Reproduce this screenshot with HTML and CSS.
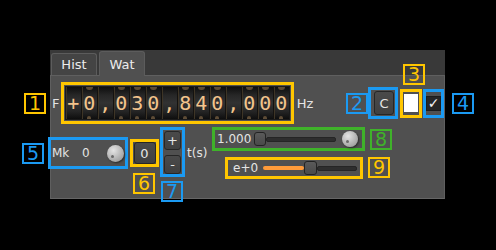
FILE: index.html
```html
<!DOCTYPE html>
<html>
	<head>
		<meta charset="UTF-8">
		<title>Wat</title>
		<link rel="stylesheet" href="styles.css">
	</head>
	<body>
		<div class="window">
			<div class="tabs">
				<div class="tab">Hist</div>
				<div class="tab tab-on">Wat</div>
			</div>
			<div class="panel">
				<!-- frequency row -->
				<div class="row row-freq">
					<span class="lbl-f">F</span>
					<div class="hl hl-yellow freq">
						<div class="digits">
							<div class="cell">+</div>
							<div class="cell roll">0</div>
							<div class="cell">,</div>
							<div class="cell roll">0</div>
							<div class="cell roll">3</div>
							<div class="cell roll">0</div>
							<div class="cell">,</div>
							<div class="cell roll">8</div>
							<div class="cell roll">4</div>
							<div class="cell roll">0</div>
							<div class="cell">,</div>
							<div class="cell roll">0</div>
							<div class="cell roll">0</div>
							<div class="cell roll">0</div>
						</div>
					</div>
					<span class="lbl-hz">Hz</span>
					<div class="hl hl-blue box-c"><span class="btn btn-c">C</span></div>
					<div class="hl hl-yellow box-sw"><span class="swatch"></span></div>
					<div class="hl hl-blue box-ck"><span class="check">&#10003;</span></div>
				</div>

				<!-- controls row -->
				<div class="row row-ctl">
					<div class="hl hl-blue box-mk">
						<span class="mk-lbl">Mk</span>
						<span class="mk-val">0</span>
						<span class="knob"></span>
					</div>
					<div class="hl hl-yellow box-zero"><span class="btn btn-zero">0</span></div>
					<div class="hl hl-blue box-pm">
						<span class="btn btn-pm">+</span>
						<span class="btn btn-pm">-</span>
					</div>
					<span class="lbl-t">t(s)</span>
					<div class="sliders">
						<div class="hl hl-green box-time">
							<span class="val">1.000</span>
							<div class="slider slider-time">
								<span class="handle"></span>
								<span class="rest"></span>
							</div>
							<span class="knob knob-sm"></span>
						</div>
						<div class="hl hl-yellow box-exp">
							<span class="val">e+0</span>
							<div class="slider slider-exp">
								<span class="fill" style="width: 41px;"></span>
								<span class="handle"></span>
								<span class="rest"></span>
							</div>
						</div>
					</div>
				</div>
			</div>
		</div>

		<span class="badge by b1">1</span>
		<span class="badge bb b2">2</span>
		<span class="badge by b3">3</span>
		<span class="badge bb b4">4</span>
		<span class="badge bb b5">5</span>
		<span class="badge by b6">6</span>
		<span class="badge bb b7">7</span>
		<span class="badge bg b8">8</span>
		<span class="badge by b9">9</span>
	</body>
</html>
```

FILE: styles.css
```css
body {
	margin: 0;
	width: 496px;
	height: 250px;
	position: relative;
	overflow: hidden;
	background: #000;
	font-family: "DejaVu Sans", sans-serif;
	font-size: 12px;
	color: #e4e4e4;
}

.window {
	margin: 50px 0 0 50px;
	width: 395px;
	height: 149px;
	background: #393939;
	display: flex;
	flex-direction: column;
}

.tabs {
	display: flex;
	align-items: flex-end;
	height: 25px;
	padding-left: 1px;
	gap: 2px;
	flex-shrink: 0;
}

.tab {
	box-sizing: border-box;
	width: 46px;
	height: 22px;
	border: 1px solid #5c5c5c;
	border-bottom: none;
	border-radius: 3px 3px 0 0;
	background: #444;
	display: flex;
	align-items: center;
	justify-content: center;
	font-size: 13px;
	color: #ececec;
}

.tab-on {
	height: 25px;
	background: #505050;
	margin-bottom: -1px;
	position: relative;
	z-index: 1;
}

.panel {
	flex: 1;
	background: #505050;
	border: 1px solid #5f5f5f;
	border-bottom-color: #666;
	padding: 6px 0 0 0;
}

.row {
	display: flex;
	align-items: center;
	padding-left: 1px;
}

.row-ctl {
	margin-top: 3px;
}

/* highlight frames */
.hl {
	box-sizing: border-box;
	border: 3px solid;
	display: flex;
	align-items: center;
	flex-shrink: 0;
}

.hl-yellow { border-color: #ffc600; }
.hl-blue { border-color: #1b9af2; }
.hl-green { border-color: #3fb22a; }

/* frequency display */
.lbl-f {
	width: 10px;
	font-size: 13px;
}

.freq {
	width: 233px;
	height: 42px;
	padding: 1px;
}

.digits {
	display: flex;
	width: 100%;
	height: 100%;
	box-sizing: border-box;
	border: 1px solid #1a1a1a;
	background: #111;
}

.cell {
	flex: 1;
	height: 100%;
	display: flex;
	flex-direction: column;
	justify-content: space-between;
	align-items: center;
	border-right: 1px solid #141210;
	box-shadow: inset 1px 0 #3e3526;
	background: linear-gradient(#0e0e0e, #262626 25%, #323232 50%, #262626 75%, #0e0e0e);
	font-family: "DejaVu Sans Mono", monospace;
	font-size: 20px;
	line-height: 32px;
	color: #f3c48c;
}

.cell:last-child {
	border-right: none;
}

/* edges of the neighbouring digits on the drum */
.roll {
	line-height: normal;
}

.roll::before,
.roll::after {
	content: "";
	display: block;
	width: 7px;
	height: 3px;
	background: #5e4c36;
	border-radius: 0 0 3px 3px;
}

.roll::after {
	border-radius: 3px 3px 0 0;
	width: 4px;
}

.lbl-hz {
	width: 20px;
	margin-left: 3px;
	font-size: 13px;
}

.btn {
	box-sizing: border-box;
	display: flex;
	align-items: center;
	justify-content: center;
	background: linear-gradient(#4a4a4a, #404040);
	border: 1px solid #262626;
	border-radius: 3px;
	color: #e6e6e6;
	font-size: 13px;
}

.box-c {
	width: 30px;
	height: 32px;
	margin-left: 54px;
	padding-left: 3px;
}

.btn-c {
	width: 20px;
	height: 24px;
}

.box-sw {
	width: 22px;
	height: 29px;
	margin-left: 2px;
	justify-content: center;
}

.swatch {
	width: 14px;
	height: 18px;
	background: #fff;
}

.box-ck {
	width: 21px;
	height: 29px;
	margin-left: 1px;
	justify-content: center;
}

.check {
	box-sizing: border-box;
	width: 15px;
	height: 15px;
	background: #262626;
	border: 1px solid #1c1c1c;
	color: #f4f4f4;
	font-size: 14px;
	line-height: 13px;
	text-align: center;
}

/* controls row */
.box-mk {
	width: 80px;
	height: 32px;
	margin-left: -4px;
	padding-left: 1px;
}

.mk-lbl {
	width: 30px;
}

.mk-val {
	width: 24px;
}

.knob {
	box-sizing: border-box;
	width: 17px;
	height: 17px;
	border-radius: 50%;
	background: radial-gradient(circle at 38% 32%, #e4e4e4, #b8b8b8 50%, #8c8c8c);
	box-shadow: 1px 1px 2px #2a2a2a;
	padding: 10px 0 0 4px;
	margin-left: 1px;
}

.knob::after {
	content: "";
	display: block;
	width: 3px;
	height: 3px;
	border-radius: 50%;
	background: #6a6a6a;
}

.knob-sm {
	width: 16px;
	height: 16px;
	padding: 9px 0 0 4px;
	margin-left: 6px;
}

.box-zero {
	width: 29px;
	height: 28px;
	margin-left: 2px;
	justify-content: center;
}

.btn-zero {
	width: 22px;
	height: 22px;
}

.box-pm {
	width: 25px;
	height: 50px;
	margin-left: 1px;
	flex-direction: column;
	justify-content: center;
	gap: 5px;
	align-self: flex-start;
}

.btn-pm {
	width: 17px;
	height: 19px;
}

.lbl-t {
	width: 20px;
	margin-left: 2px;
}

.sliders {
	display: flex;
	flex-direction: column;
	align-items: flex-start;
	gap: 6px;
	margin-left: 5px;
}

.box-time {
	width: 153px;
	height: 24px;
	padding-left: 2px;
}

.box-exp {
	width: 138px;
	height: 22px;
	margin-left: 13px;
	padding-left: 5px;
}

.slider {
	display: flex;
	align-items: center;
	height: 14px;
}

.slider-time {
	width: 82px;
	margin-left: 3px;
}

.slider-exp {
	width: 94px;
	margin-left: 5px;
}

.slider .handle {
	box-sizing: border-box;
	width: 12px;
	height: 14px;
	flex-shrink: 0;
	border-radius: 3px;
	border: 1px solid #232323;
	background: linear-gradient(#5a5a5a, #4a4a4a);
}

.slider-exp .handle {
	width: 13px;
}

.slider .rest {
	flex: 1;
	height: 5px;
	box-sizing: border-box;
	border: 1px solid #252525;
	border-radius: 2px;
	background: #2e2e2e;
}

.slider .fill {
	height: 4px;
	flex-shrink: 0;
	border-radius: 2px;
	background: #ff9b3a;
}

/* numbered callouts */
.badge {
	position: absolute;
	box-sizing: border-box;
	width: 22px;
	height: 21px;
	border: 2px solid;
	font-size: 19px;
	line-height: 17px;
	text-align: center;
}

.by { border-color: #ffc600; color: #ffc600; }
.bb { border-color: #1b9af2; color: #1b9af2; }
.bg { border-color: #3fb22a; color: #3fb22a; }

.b1 { left: 24px; top: 93px; }
.b2 { left: 346px; top: 93px; }
.b3 { left: 403px; top: 64px; }
.b4 { left: 452px; top: 93px; }
.b5 { left: 22px; top: 143px; }
.b6 { left: 133px; top: 173px; }
.b7 { left: 161px; top: 181px; }
.b8 { left: 370px; top: 129px; }
.b9 { left: 368px; top: 157px; }
```
